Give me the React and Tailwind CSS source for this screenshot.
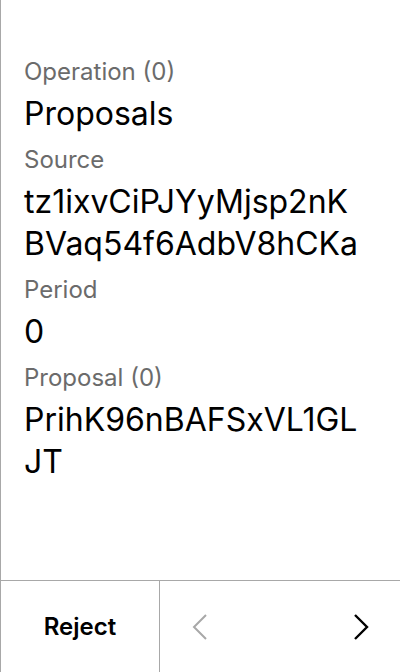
const Field = ({ label, value, first }) => {
  return (
    <div className={first ? "" : "mt-[9px]"}>
      <div className="text-[24px] leading-[32px] text-[#6b6b6b]">{label}</div>
      <div className="mt-[5px] text-[32px] leading-[42px] text-black break-all">{value}</div>
    </div>
  );
};

const App = () => {
  return (
    <div
      className="h-[672px] w-[400px] bg-white border-l border-[#a8a8a8] flex flex-col"
      style={{ fontFamily: "Inter, 'Noto Sans', sans-serif" }}
    >
      {/* Operation details */}
      <div className="flex-1 pt-[56px] pl-[23px] pr-[36px]">
        <Field first label="Operation (0)" value="Proposals" />
        <Field label="Source" value="tz1ixvCiPJYyMjsp2nKBVaq54f6AdbV8hCKa" />
        <Field label="Period" value="0" />
        <Field label="Proposal (0)" value="PrihK96nBAFSxVL1GLJT" />
      </div>

      {/* Footer */}
      <div className="h-[92px] border-t border-[#a8a8a8] flex flex-row">
        <div className="w-[159px] flex items-center justify-center border-r border-[#a8a8a8]">
          <span className="text-[24px] font-semibold text-black">Reject</span>
        </div>
        <div className="flex-1 flex items-center justify-between pl-[32px] pr-[31px]">
          <svg width="16" height="26" viewBox="0 0 16 26" fill="none">
            <path d="M14 1 L2 13 L14 25" stroke="#a8a8a8" strokeWidth="2" />
          </svg>
          <svg width="16" height="26" viewBox="0 0 16 26" fill="none">
            <path d="M2 1 L14 13 L2 25" stroke="#000" strokeWidth="2.4" />
          </svg>
        </div>
      </div>
    </div>
  );
};

export default App;
